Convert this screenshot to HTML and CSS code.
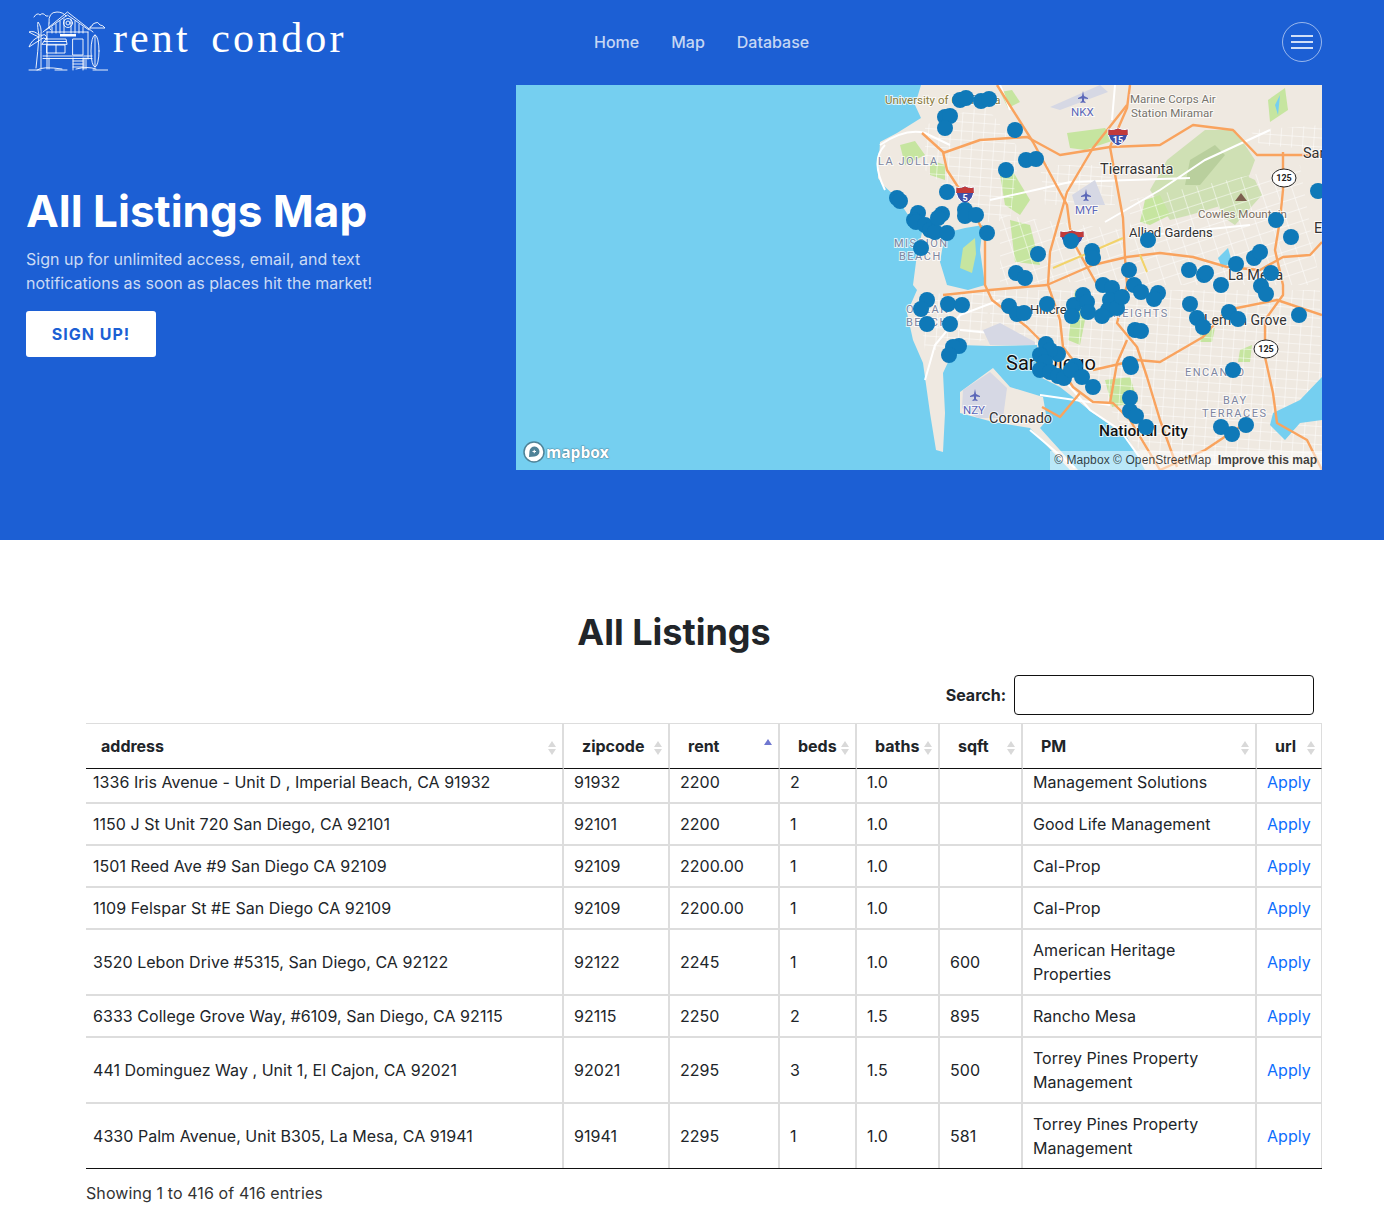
FILE: index.html
```html
<!DOCTYPE html>
<html lang="en">
<head>
<meta charset="utf-8">
<title>Rent Condor</title>
<link rel="stylesheet" href="styles.css">
</head>
<body>
<section class="hero">
  <header class="topbar">
    <a class="brand" href="#">
      <svg class="brand-mark" viewBox="28 12 80 62" fill="none" stroke="#fff" stroke-width="0.9" stroke-linecap="round" stroke-linejoin="round">
        <path d="M43 33 L67.5 13 L93 33"/>
        <path d="M46 31 L67.5 16 L89 31"/>
        <path d="M52 28 V34 M56 25 V34 M60 22 V34 M64 20 V34 M71 20 V34 M75 22 V34 M79 25 V34 M83 28 V34"/>
        <circle cx="68" cy="24" r="4.5"/><circle cx="68" cy="24" r="2"/>
        <path d="M47 33 H88 M47 33 V58 M88 33 V60"/>
        <rect x="60" y="35" width="16" height="2.5" fill="#fff" stroke="none"/>
        <path d="M42 45 L46 40 H66 L67 45 Z M44 42.5 H66"/>
        <rect x="47" y="46" width="18" height="8"/><path d="M56 46 V54"/>
        <rect x="73" y="40" width="10" height="16"/>
        <path d="M43 57 H92 M43 59.5 H92"/>
        <path d="M47 59 V70 M49 59 V70 M84 59 V70 M86 59 V70"/>
        <path d="M73 59 V71 M83 59 V71 M73 62 H83 M73 65 H83 M73 68 H83"/>
        <ellipse cx="95" cy="52" rx="4" ry="16"/><path d="M95 36 V68"/>
        <path d="M49 24 Q48 13 57 13 Q63 13 66 17 M49 24 Q48 29 51 31"/>
        <path d="M34 18 Q37 13 40 16 Q43 13 46 17 H48"/>
        <path d="M90 29 H105 Q103 26 100 26 Q98 22 95 24 Q92 25 92 27 Q90 27 90 29 Z"/>
        <path d="M36 69 Q38 52 39 36 M41 69 Q41 52 41 36"/>
        <path d="M39 36 Q37 27 38 23 Q42 28 41 36 M39 36 Q34 31 29 33 Q34 36 39 38 M41 37 Q46 33 47 40 Q43 38 41 40 M39 38 Q32 40 29 48 Q35 44 40 41"/>
        <path d="M37 71 Q42 67 62 70 M29 71 H41 M55 71 H67 M93 71 H108 M76 70 Q88 67 96 70"/>
      </svg>
      <span class="brand-name">rent condor</span>
    </a>
    <nav class="nav">
      <a href="#">Home</a>
      <a href="#">Map</a>
      <a href="#">Database</a>
    </nav>
    <button class="toggler" type="button" aria-label="Menu"><span></span><span></span><span></span></button>
  </header>

  <div class="hero-body">
    <div class="hero-copy">
      <h1>All Listings Map</h1>
      <p>Sign up for unlimited access, email, and text<br>notifications as soon as places hit the market!</p>
      <a class="cta" href="#">SIGN UP!</a>
    </div>

    <div class="map">
      <svg class="map-svg" viewBox="516 85 806 385">
        <defs>
          <pattern id="streets" width="11" height="9" patternUnits="userSpaceOnUse" patternTransform="rotate(4)">
            <path d="M0 0 H11 M0 0 V9" stroke="#fff" stroke-width="1" fill="none"/>
          </pattern>
          <pattern id="streets2" width="15" height="12" patternUnits="userSpaceOnUse" patternTransform="rotate(-18)">
            <path d="M0 0 H15 M0 0 V12" stroke="#fff" stroke-width="1" fill="none"/>
          </pattern>
        </defs>
        <rect class="water" x="516" y="85" width="806" height="385"/>
        <path class="land" d="M921 85 L915 105 L921 118 L897 133 L880 142 L878 178 L883 185 L897 198 L910 218 L922 232 L916 262 L913 285 L917 290 L907 313 L913 340 L923 363 L930 413 L936 450 L943 452 L945 413 L943 373 L950 358 L960 345 L990 346 L1037 345 L1040 377 L1060 387 L1093 413 L1127 437 L1145 470 L1322 470 L1322 85 Z"/>
        <path class="land" d="M960 392 L993 368 L1010 387 L1043 397 L1047 420 L1040 428 L1078 470 L1070 470 L1030 428 L993 422 L960 413 Z"/>

        <path class="hill" d="M1167 160 L1205 130 L1235 130 L1255 160 L1240 200 L1190 215 L1170 220 L1150 190 Z"/>
        <path class="hill" d="M1222 165 L1255 180 L1262 195 L1235 225 L1220 215 L1215 185 Z"/>
        <path class="hill-dark" d="M1190 160 L1215 145 L1225 155 L1200 185 L1185 185 Z"/>
        <path class="park" d="M1067 133 L1105 128 L1115 140 L1085 150 L1070 148 Z"/>
        <path class="park" d="M1000 175 L1012 170 L1030 200 L1020 215 L1005 205 Z"/>
        <path class="park" d="M1010 220 L1030 225 L1040 265 L1015 262 Z"/>
        <path class="park" d="M900 145 L915 141 L925 155 L905 165 Z"/>
        <path class="park" d="M1145 200 L1160 195 L1170 215 L1150 225 L1140 222 Z"/>
        <path class="park" d="M1075 290 L1090 295 L1080 345 L1068 340 Z"/>
        <path class="park" d="M1105 380 L1130 377 L1138 402 L1112 407 Z"/>
        <path class="park" d="M1000 92 L1012 90 L1020 102 L1008 108 Z"/>
        <path class="park" d="M1268 100 L1285 88 L1288 110 L1270 122 Z"/>
        <path class="park" d="M930 160 L945 165 L945 180 L930 175 Z"/>
        <path class="park" d="M1240 350 L1252 345 L1250 362 L1238 362 Z"/>
        <path class="park" d="M1200 330 L1215 328 L1212 342 L1200 342 Z"/>

        <path class="grid" fill="url(#streets)" d="M925 125 L985 105 L1020 150 L1010 220 L985 222 L950 190 L925 170 Z"/>
        <path class="grid" fill="url(#streets)" d="M1040 165 L1110 165 L1115 205 L1045 205 Z"/>
        <path class="grid" fill="url(#streets2)" d="M1000 215 L1125 230 L1125 280 L1000 285 Z"/>
        <path class="grid" fill="url(#streets)" d="M990 290 L1320 290 L1322 465 L1150 465 L1100 395 L1040 345 L990 340 Z"/>
        <path class="grid" fill="url(#streets2)" d="M1130 200 L1300 165 L1320 285 L1130 285 Z"/>
        <path class="grid" fill="url(#streets)" d="M1250 130 L1322 125 L1322 150 L1260 145 Z"/>
        <path class="grid" fill="url(#streets)" d="M918 295 L990 290 L985 340 L945 350 L925 350 Z"/>

        <path class="water" d="M1273 413 L1300 400 L1322 377 L1322 420 L1300 423 L1285 440 L1270 425 Z"/>
        <path class="water" d="M945 233 L965 228 L983 225 L980 250 L985 285 L968 290 L947 285 L940 262 Z"/>
        <path class="park" d="M963 248 L975 238 L976 254 L972 273 L960 268 Z"/>
        <path class="water" d="M1218 258 L1228 248 L1232 262 L1222 268 Z"/>
        <path class="water" d="M1275 105 L1280 95 L1278 115 Z"/>

        <g class="road-w">
          <path d="M880 145 Q905 128 925 133 L950 145 M885 190 Q870 160 885 145"/>
          <path d="M990 200 L1035 190 L1070 182 L1190 178 M1105 222 L1160 190 L1205 160 L1270 130 M1150 235 L1250 225"/>
          <path d="M1000 85 L1010 110 M1115 85 L1112 120"/>
          <path d="M925 380 L935 345 L960 315 L1000 300 M1030 430 L1075 468 M1040 395 L1110 405 M1010 335 L960 330"/>
          <path d="M1060 375 L1090 410 L1120 430 L1145 465"/>
        </g>
        <g class="road-o">
          <path d="M922 133 L943 152 L947 170 L960 190 L975 215 L985 235 L985 285 L992 300 L1027 327 L1047 347 L1073 387 L1093 402 L1113 403 L1130 420 L1160 470"/>
          <path d="M997 85 L1033 142 L1067 205 L1070 228 L1075 245 L1100 290"/>
          <path d="M943 153 L980 140 L1027 137 L1060 155 L1110 147 L1160 145 L1193 125 L1233 130 L1257 155 L1322 155"/>
          <path d="M1130 85 L1127 108 L1110 147 L1123 218 L1125 258 L1127 285 L1117 323 L1137 347 L1147 377 L1160 420 L1177 467"/>
          <path d="M1127 105 L1093 148 L1067 192 L1050 252 L1048 285 L1060 320 L1063 347 L1073 360"/>
          <path d="M943 295 L990 290 L1047 285 L1093 265 L1127 257 L1160 253 L1193 257 L1227 267 L1260 270 L1283 257 L1310 255 L1322 242"/>
          <path d="M1283 152 L1283 190 L1280 220 L1275 250 L1283 285 L1283 295 L1265 320 L1265 357 L1273 393 L1277 423 L1307 440 L1322 470"/>
          <path d="M1093 370 L1137 360 L1160 362 L1203 337 L1227 310 L1277 300 L1322 315"/>
          <path d="M1110 403 L1117 363 L1127 340"/>
          <path d="M1042 407 L1060 417 L1080 393"/>
          <path d="M1160 470 L1205 450 L1250 420"/>
        </g>
        <g class="road-y">
          <path d="M1053 268 L1067 262 L1100 248 L1123 238 M1140 255 L1147 272"/>
        </g>
        <path class="airport" d="M1050 107 L1100 85 L1108 92 L1060 110 Z"/>
        <path class="airport" d="M1072 195 L1095 180 L1105 205 L1075 205 Z"/>
        <path class="airport" d="M963 390 L990 372 L1007 388 L1003 418 L978 418 L962 408 Z"/>
        <path class="airport" d="M983 330 L1000 323 L1035 342 L1035 345 L990 345 Z"/>

        <text class="lbl olive" x="885" y="104">University of California</text>
        <text class="lbl blue" x="1071" y="116">NKX</text>
        <text class="lbl grey" x="1130" y="103">Marine Corps Air</text>
        <text class="lbl grey" x="1131" y="117">Station Miramar</text>
        <text class="lbl dark lg" x="1303" y="158">San</text>
        <text class="lbl dark lg" x="1314" y="233">E</text>
        <text class="lbl dark lg" x="1100" y="174">Tierrasanta</text>
        <text class="lbl mute wide" x="878" y="165">LA JOLLA</text>
        <text class="lbl blue" x="1075" y="214">MYF</text>
        <text class="lbl brown" x="1198" y="218">Cowles Mountain</text>
        <text class="lbl dark md" x="1129" y="237">Allied Gardens</text>
        <text class="lbl mute wide" x="894" y="247">MISSION</text>
        <text class="lbl mute wide" x="899" y="260">BEACH</text>
        <text class="lbl dark lg" x="1228" y="280">La Mesa</text>
        <text class="lbl dark md" x="1030" y="314">Hillcrest</text>
        <text class="lbl mute wide" x="1113" y="317">HEIGHTS</text>
        <text class="lbl dark grove" x="1204" y="325">Lemon Grove</text>
        <text class="lbl mute wide" x="906" y="313">OCEAN</text>
        <text class="lbl mute wide" x="906" y="326">BEACH</text>
        <text class="lbl city" x="1006" y="370">San Diego</text>
        <text class="lbl mute wide" x="1185" y="376">ENCANTO</text>
        <text class="lbl mute wide" x="1223" y="404">BAY</text>
        <text class="lbl mute wide" x="1202" y="417">TERRACES</text>
        <text class="lbl blue" x="963" y="414">NZY</text>
        <text class="lbl dark lg" x="989" y="423">Coronado</text>
        <text class="lbl strong" x="1099" y="436">National City</text>

        <g class="plane">
          <path d="M1083 91 L1084 96 L1088 98 V99 L1084 98.5 L1084 101 L1085.500 102 V103 L1083 102.500 L1080.500 103 V102 L1082 101 L1082 98.500 L1078 99 V98 L1082 96 Z"/>
          <path d="M1086 189 L1087 194 L1091 196 V197 L1087 196.500 L1087 199 L1088.500 200 V201 L1086 200.500 L1083.500 201 V200 L1085 199 L1085 196.500 L1081 197 V196 L1085 194 Z"/>
          <path d="M975 389 L976 394 L980 396 V397 L976 396.500 L976 399 L977.500 400 V401 L975 400.500 L972.500 401 V400 L974 399 L974 396.500 L970 397 V396 L974 394 Z"/>
        </g>
        <path class="peak" d="M1241 193 L1247 201 H1235 Z"/>

        <g>
          <path class="shield-blue" d="M1108 129 Q1113 131 1118 128 Q1123 131 1128 129 Q1129 141 1118 146 Q1107 141 1108 129 Z"/>
          <path class="shield-red" d="M1108.500 129.500 Q1113 131 1118 128.500 Q1123 131 1127.500 129.500 L1127.800 135 H1108.200 Z"/>
          <text class="shield-t" x="1118" y="143">15</text>
          <path class="shield-blue" d="M956 187 Q960 189 965 186 Q970 189 974 187 Q975 199 965 204 Q955 199 956 187 Z"/>
          <path class="shield-red" d="M956.500 187.500 Q960 189 965 186.500 Q970 189 973.500 187.500 L973.800 193 H956.200 Z"/>
          <text class="shield-t" x="965" y="201">5</text>
          <path class="shield-blue" d="M1060 231 Q1066 233 1072 230 Q1078 233 1084 231 Q1085 242 1072 248 Q1059 242 1060 231 Z"/>
          <path class="shield-red" d="M1060.500 231.500 Q1066 233 1072 230.500 Q1078 233 1083.500 231.500 L1083.800 237 H1060.200 Z"/>
          <ellipse class="route" cx="1284" cy="178" rx="12" ry="9"/>
          <text class="route-t" x="1284" y="181">125</text>
          <ellipse class="route" cx="1266" cy="349" rx="12" ry="9"/>
          <text class="route-t" x="1266" y="352">125</text>
        </g>

        <g class="pins">
          <circle cx="960" cy="100" r="8"/><circle cx="966" cy="98" r="8"/><circle cx="981" cy="101" r="8"/><circle cx="989" cy="99" r="8"/><circle cx="945" cy="117" r="8"/><circle cx="950" cy="116" r="8"/><circle cx="945" cy="128" r="8"/><circle cx="1015" cy="130" r="8"/><circle cx="1026" cy="160" r="8"/><circle cx="1036" cy="159" r="8"/><circle cx="1006" cy="170" r="8"/><circle cx="947" cy="192" r="8"/><circle cx="897" cy="198" r="8"/><circle cx="900" cy="201" r="8"/><circle cx="918" cy="213" r="8"/><circle cx="914" cy="220" r="8"/><circle cx="916" cy="222" r="8"/><circle cx="925" cy="225" r="8"/><circle cx="930" cy="230" r="8"/><circle cx="935" cy="232" r="8"/><circle cx="942" cy="214" r="8"/><circle cx="938" cy="218" r="8"/><circle cx="947" cy="233" r="8"/><circle cx="965" cy="210" r="8"/><circle cx="965" cy="216" r="8"/><circle cx="976" cy="215" r="8"/><circle cx="987" cy="233" r="8"/><circle cx="921" cy="248" r="8"/><circle cx="1038" cy="254" r="8"/><circle cx="1071" cy="241" r="8"/><circle cx="1092" cy="251" r="8"/><circle cx="1093" cy="258" r="8"/><circle cx="1148" cy="240" r="8"/><circle cx="1016" cy="273" r="8"/><circle cx="1025" cy="278" r="8"/><circle cx="1129" cy="270" r="8"/><circle cx="1189" cy="270" r="8"/><circle cx="1204" cy="275" r="8"/><circle cx="1206" cy="273" r="8"/><circle cx="1221" cy="285" r="8"/><circle cx="1236" cy="264" r="8"/><circle cx="1254" cy="258" r="8"/><circle cx="1260" cy="252" r="8"/><circle cx="1276" cy="220" r="8"/><circle cx="1291" cy="237" r="8"/><circle cx="1318" cy="191" r="8"/><circle cx="1271" cy="273" r="8"/><circle cx="1261" cy="286" r="8"/><circle cx="1266" cy="294" r="8"/>
          <circle cx="927" cy="300" r="8"/><circle cx="921" cy="309" r="8"/><circle cx="948" cy="304" r="8"/><circle cx="962" cy="305" r="8"/><circle cx="927" cy="324" r="8"/><circle cx="950" cy="324" r="8"/><circle cx="1009" cy="306" r="8"/><circle cx="1017" cy="314" r="8"/><circle cx="1024" cy="313" r="8"/><circle cx="1047" cy="304" r="8"/><circle cx="1074" cy="305" r="8"/><circle cx="1072" cy="316" r="8"/><circle cx="1083" cy="295" r="8"/><circle cx="1087" cy="302" r="8"/><circle cx="1088" cy="312" r="8"/><circle cx="1103" cy="285" r="8"/><circle cx="1112" cy="288" r="8"/><circle cx="1110" cy="300" r="8"/><circle cx="1108" cy="310" r="8"/><circle cx="1117" cy="308" r="8"/><circle cx="1122" cy="297" r="8"/><circle cx="1134" cy="285" r="8"/><circle cx="1141" cy="292" r="8"/><circle cx="1102" cy="316" r="8"/><circle cx="1158" cy="293" r="8"/><circle cx="1154" cy="299" r="8"/><circle cx="1190" cy="304" r="8"/><circle cx="1197" cy="318" r="8"/><circle cx="1203" cy="327" r="8"/><circle cx="1229" cy="312" r="8"/><circle cx="1238" cy="319" r="8"/><circle cx="1299" cy="315" r="8"/><circle cx="1135" cy="330" r="8"/><circle cx="1141" cy="331" r="8"/><circle cx="959" cy="346" r="8"/><circle cx="953" cy="347" r="8"/><circle cx="949" cy="355" r="8"/>
          <circle cx="1046" cy="344" r="8"/><circle cx="1058" cy="354" r="8"/><circle cx="1050" cy="350" r="8"/><circle cx="1040" cy="355" r="8"/><circle cx="1045" cy="362" r="8"/><circle cx="1040" cy="370" r="8"/><circle cx="1050" cy="372" r="8"/><circle cx="1058" cy="376" r="8"/><circle cx="1064" cy="378" r="8"/><circle cx="1075" cy="366" r="8"/><circle cx="1071" cy="370" r="8"/><circle cx="1082" cy="377" r="8"/><circle cx="1093" cy="387" r="8"/><circle cx="1130" cy="364" r="8"/><circle cx="1131" cy="367" r="8"/><circle cx="1233" cy="370" r="8"/><circle cx="1130" cy="398" r="8"/><circle cx="1130" cy="411" r="8"/><circle cx="1136" cy="416" r="8"/><circle cx="1146" cy="427" r="8"/><circle cx="1221" cy="427" r="8"/><circle cx="1232" cy="434" r="8"/><circle cx="1246" cy="425" r="8"/>
        </g>
      </svg>
      <div class="mapbox-logo">
        <svg class="mapbox-mark" viewBox="0 0 22 22">
          <circle cx="11" cy="11" r="10" fill="#fff" stroke="#4f8297" stroke-width="1.500"/>
          <path d="M6 16 L6.500 10 A5 5 0 1 1 11.500 15.500 Z" fill="#4f8297"/>
          <path d="M9.500 10.500 H13 M11.250 8.800 V12.200" stroke="#fff" stroke-width="1"/>
        </svg>
        <span class="mapbox-word">mapbox</span>
      </div>
      <div class="attribution">© Mapbox © OpenStreetMap <b>Improve this map</b></div>
    </div>
  </div>
</section>

<main class="listings">
  <h2>All Listings</h2>
  <div class="search-row">
    <label class="search-label" for="q">Search:</label>
    <input class="search-input" id="q" type="search">
  </div>

  <div class="table-head">
    <table>
      <colgroup><col class="c1"><col class="c2"><col class="c3"><col class="c4"><col class="c5"><col class="c6"><col class="c7"><col class="c8"></colgroup>
      <thead>
        <tr>
          <th class="first">address</th><th>zipcode</th><th class="asc">rent</th><th>beds</th><th>baths</th><th>sqft</th><th>PM</th><th>url</th>
        </tr>
      </thead>
    </table>
  </div>
  <div class="table-body">
    <table>
      <colgroup><col class="c1"><col class="c2"><col class="c3"><col class="c4"><col class="c5"><col class="c6"><col class="c7"><col class="c8"></colgroup>
      <tbody>
        <tr><td class="first">1336 Iris Avenue - Unit D , Imperial Beach, CA 91932</td><td>91932</td><td>2200</td><td>2</td><td>1.0</td><td></td><td>Management Solutions</td><td><a href="#">Apply</a></td></tr>
        <tr><td class="first">1150 J St Unit 720 San Diego, CA 92101</td><td>92101</td><td>2200</td><td>1</td><td>1.0</td><td></td><td>Good Life Management</td><td><a href="#">Apply</a></td></tr>
        <tr><td class="first">1501 Reed Ave #9 San Diego CA 92109</td><td>92109</td><td>2200.00</td><td>1</td><td>1.0</td><td></td><td>Cal-Prop</td><td><a href="#">Apply</a></td></tr>
        <tr><td class="first">1109 Felspar St #E San Diego CA 92109</td><td>92109</td><td>2200.00</td><td>1</td><td>1.0</td><td></td><td>Cal-Prop</td><td><a href="#">Apply</a></td></tr>
        <tr><td class="first">3520 Lebon Drive #5315, San Diego, CA 92122</td><td>92122</td><td>2245</td><td>1</td><td>1.0</td><td>600</td><td>American Heritage Properties</td><td><a href="#">Apply</a></td></tr>
        <tr><td class="first">6333 College Grove Way, #6109, San Diego, CA 92115</td><td>92115</td><td>2250</td><td>2</td><td>1.5</td><td>895</td><td>Rancho Mesa</td><td><a href="#">Apply</a></td></tr>
        <tr><td class="first">441 Dominguez Way , Unit 1, El Cajon, CA 92021</td><td>92021</td><td>2295</td><td>3</td><td>1.5</td><td>500</td><td>Torrey Pines Property Management</td><td><a href="#">Apply</a></td></tr>
        <tr><td class="first">4330 Palm Avenue, Unit B305, La Mesa, CA 91941</td><td>91941</td><td>2295</td><td>1</td><td>1.0</td><td>581</td><td>Torrey Pines Property Management</td><td><a href="#">Apply</a></td></tr>
      </tbody>
    </table>
  </div>
  <p class="info">Showing 1 to 416 of 416 entries</p>
</main>
</body>
</html>
```
FILE: styles.css
```css
* { box-sizing: border-box; }
html, body { margin: 0; padding: 0; }
body { font-family: Inter, "Liberation Sans", sans-serif; font-size: 16px; line-height: 24px; color: #212529; background: #fff; }
a { text-decoration: none; }

.hero { background: #1c5fd4; height: 540px; }
.topbar { display: flex; align-items: center; height: 85px; padding: 0 62px 1px 28px; }
.brand { display: flex; align-items: center; width: 566px; color: #fff; height: 84px; }
.brand-mark { width: 80px; height: 62px; flex: none; }
.brand-name { font-family: "Liberation Serif", serif; font-size: 42px; letter-spacing: 3.1px; word-spacing: 7px; line-height: 40px; margin-left: 5px; margin-top: -8px; white-space: pre; }
.nav { display: flex; gap: 32px; }
.nav a { color: rgba(255,255,255,.75); font-weight: 500; }
.toggler { margin-left: auto; width: 40px; height: 40px; border: 1px solid rgba(255,255,255,.55); border-radius: 50%; background: none; padding: 0; display: flex; flex-direction: column; align-items: center; justify-content: center; gap: 4px; }
.toggler span { display: block; width: 22px; height: 2px; background: rgba(255,255,255,.8); }

.hero-body { display: flex; align-items: flex-start; padding: 0 62px 0 26px; }
.hero-copy { width: 490px; padding-top: 97px; }
.hero-copy h1 { margin: 0; font-size: 44px; line-height: 58px; font-weight: 700; color: #fff; }
.hero-copy p { margin: 7px 0 16px; color: rgba(255,255,255,.78); letter-spacing: .02px; }
.cta { display: inline-block; width: 130px; height: 46px; line-height: 46px; text-align: center; background: #fff; color: #1c5fd4; font-weight: 700; letter-spacing: 1px; border-radius: 3px; }

.map { position: relative; width: 806px; height: 385px; overflow: hidden; background: #75cff0; }
.map-svg { display: block; width: 806px; height: 385px; }
.water { fill: #75cff0; }
.land { fill: #efe9e1; }
.park { fill: #c6e5a0; }
.hill { fill: #cfe0b4; }
.hill-dark { fill: #b9cf9d; }
.airport { fill: #d6d8e4; }
.grid { stroke: none; }
.road-w path { fill: none; stroke: #fff; stroke-width: 2; }
.road-o path { fill: none; stroke: #f9a35e; stroke-width: 2.4; stroke-linejoin: round; }
.road-y path { fill: none; stroke: #f2d36a; stroke-width: 2; }
.lbl { font-family: Roboto, "Liberation Sans", sans-serif; font-size: 11.500px; paint-order: stroke; stroke: rgba(255,255,255,.75); stroke-width: 2px; }
.olive { fill: #8a7a3a; }
.blue { fill: #5b67b8; }
.grey { fill: #77746c; }
.brown { fill: #7c6f62; }
.dark { fill: #333; }
.md { font-size: 13px; }
.lg { font-size: 14.500px; }
.grove { font-size: 14px; }
.mute { fill: #7e86a0; font-size: 11px; letter-spacing: 1.500px; }
.city { font-size: 20px; fill: #111; }
.strong { font-size: 15.500px; font-weight: 500; fill: #111; }
.plane path { fill: #5b67b8; }
.peak { fill: #7c5f4e; }
.shield-blue { fill: #3f51a8; stroke: #fff; }
.shield-red { fill: #c13a3a; }
.shield-t { fill: #fff; font: 700 9px Roboto, sans-serif; text-anchor: middle; }
.route { fill: #fff; stroke: #222; stroke-width: 1; }
.route-t { fill: #222; font: 700 9px Roboto, sans-serif; text-anchor: middle; }
.pins circle { fill: #0f79b8; }

.mapbox-logo { position: absolute; left: 7px; bottom: 7px; display: flex; align-items: center; gap: 1px; }
.mapbox-mark { width: 22px; height: 22px; }
.mapbox-word { font-family: "Open Sans", sans-serif; font-weight: 700; font-size: 15.500px; line-height: 22px; color: #fff; -webkit-text-stroke: 0.6px #4f8297; paint-order: stroke; text-shadow: 0 0 2px #4f8297; }
.attribution { position: absolute; right: 0; bottom: 0; height: 19px; padding: 0 5px 0 4px; background: rgba(255,255,255,.5); font-family: "Liberation Sans", sans-serif; font-size: 12px; letter-spacing: .08px; line-height: 19px; color: rgba(0,0,0,.75); white-space: nowrap; }
.attribution b { margin-left: 3px; font-weight: 700; letter-spacing: 0; }

.listings { padding: 71px 62px 17px 86px; }
.listings h2 { margin: 0 60px 0 0; font-size: 36px; line-height: 43px; font-weight: 700; text-align: center; color: #212529; }
.search-row { display: flex; justify-content: flex-end; align-items: center; gap: 8px; margin-top: 21px; padding-right: 8px; }
.search-label { font-weight: 700; }
.search-input { width: 300px; height: 40px; border: 1px solid #111; border-radius: 4px; background: #fff; }

table { width: 1236px; border-collapse: separate; border-spacing: 0; table-layout: fixed; }
.c1 { width: 478px; } .c2 { width: 106px; } .c3 { width: 110px; } .c4 { width: 77px; }
.c5 { width: 83px; } .c6 { width: 83px; } .c7 { width: 234px; } .c8 { width: 65px; }

.table-head { margin-top: 8px; }
th { position: relative; height: 46px; padding: 0 18px; text-align: left; font-weight: 700; border-top: 1px solid #ddd; border-bottom: 1px solid #111; border-right: 2px solid #ddd; white-space: nowrap; }
th.first { padding-left: 15px; }
th:last-child { border-right: 1px solid #ddd; }
th::before, th::after { content: ""; position: absolute; right: 6px; border-left: 4px solid transparent; border-right: 4px solid transparent; }
th::before { top: 17px; border-bottom: 6px solid #d9d9d9; }
th::after { top: 25px; border-top: 6px solid #d9d9d9; }
th.asc::before { top: 15px; border-bottom-color: #6f77d0; }
th.asc::after { border-top-color: transparent; }

.table-body { height: 400px; overflow: hidden; border-bottom: 1px solid #111; }
.table-body table { margin-top: -7px; }
td { padding: 8px 10px; border-right: 2px solid #ddd; border-bottom: 2px solid #ddd; vertical-align: middle; letter-spacing: .04px; }
td.first { padding-left: 7px; }
td:last-child { border-right: 1px solid #ddd; }
td a { color: #0d6efd; }

.info { margin: 12px 0 0; color: #333; letter-spacing: .1px; }
```
